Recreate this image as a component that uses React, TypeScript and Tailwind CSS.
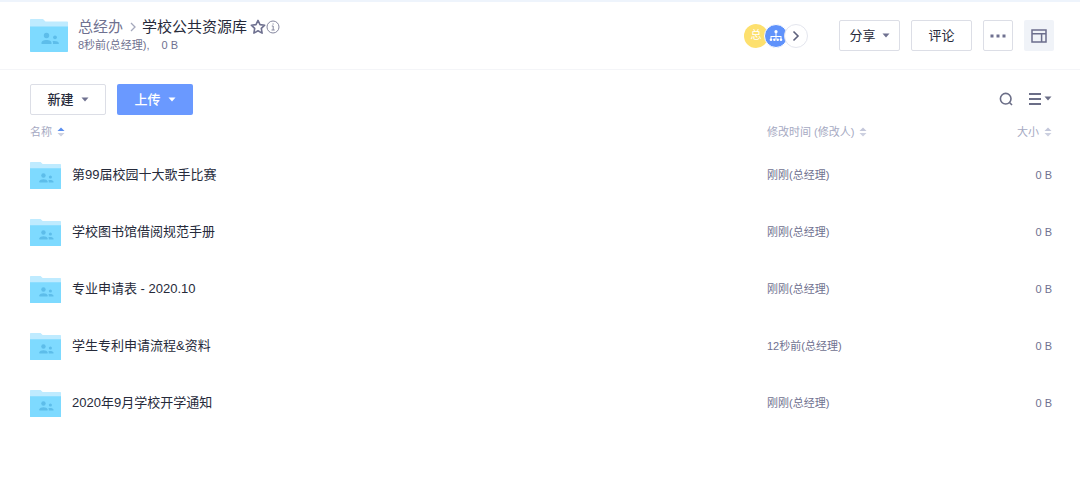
import React from "react";

interface FileEntry {
    name: string;
    modified: string;
    size: string;
}

const files: FileEntry[] = [
    { name: "第99届校园十大歌手比赛", modified: "刚刚(总经理)", size: "0 B" },
    { name: "学校图书馆借阅规范手册", modified: "刚刚(总经理)", size: "0 B" },
    { name: "专业申请表 - 2020.10", modified: "刚刚(总经理)", size: "0 B" },
    { name: "学生专利申请流程&资料", modified: "12秒前(总经理)", size: "0 B" },
    { name: "2020年9月学校开学通知", modified: "刚刚(总经理)", size: "0 B" },
];

const FolderIcon = ({ className }: { className: string }) => (
    <svg viewBox="0 0 38 33" className={className} aria-hidden="true">
        <path d="M0 .8Q0 0 .8 0h12.200l2.500 2.500H37.200q.8 0 .8.8V9H0z" fill="#bfebff" />
        <path d="M0 7.500h38V32.300q0 .7-.7.7H.7q-.7 0-.7-.7z" fill="#7edaff" />
        <g fill="#5dbdea">
            <circle cx="16.500" cy="16.500" r="2.700" />
            <path d="M11.500 25v-1.300c0-1.900 2.800-2.700 5-2.700s5 .8 5 2.700V25z" />
            <circle cx="25" cy="18.300" r="1.900" />
            <path d="M23 25v-1.500c0-.6-.2-1-.5-1.400 2.500-.6 6.300.1 6.300 1.900v1z" />
        </g>
    </svg>
);

const Caret = ({ className }: { className: string }) => (
    <svg viewBox="0 0 8 5" className={`h-[5px] w-2 shrink-0 ${className}`} fill="currentColor" aria-hidden="true">
        <path d="M.5.5h7L4 4.500z" />
    </svg>
);

const SortArrows = ({ ascending = false }: { ascending?: boolean }) => (
    <svg viewBox="0 0 8 10" className="h-[10px] w-2 shrink-0" aria-hidden="true">
        <path d="M.5 4h7L4 .5z" fill={ascending ? "#5b8ff0" : "#c3c7da"} />
        <path d="M.5 6h7L4 9.500z" fill="#ccd0e0" />
    </svg>
);

const App: React.FC = () => {
    return (
        <div className="min-h-screen bg-white font-['Liberation_Sans','Noto_Sans_CJK_SC',sans-serif] text-[#262a3a]">
            {/* Folder header */}
            <header className="flex h-[70px] items-center justify-between border-t-2 border-b border-t-[#eef4fc] border-b-[#f4f5f8] pr-[26px] pl-[30px]">
                <div className="flex items-center gap-[10px]">
                    <FolderIcon className="h-[33px] w-[38px]" />
                    <div className="pb-[2px]">
                        <div className="flex h-5 items-center text-[15px] leading-5">
                            <a href="#" className="text-[#6f7190]">总经办</a>
                            <svg viewBox="0 0 19 10" className="h-[10px] w-[19px]" fill="none" stroke="#a5a8bc" strokeWidth="1.300" aria-hidden="true">
                                <path d="m8 1 4 4-4 4" />
                            </svg>
                            <h1>学校公共资源库</h1>
                            <button type="button" aria-label="收藏" className="ml-[3px] text-[#6f7190]">
                                <svg viewBox="0 0 16 16" className="size-4" fill="none" stroke="currentColor" strokeWidth="1.600" strokeLinejoin="round">
                                    <path d="m8 1.400 2 4.200 4.700.6-3.400 3.200.8 4.700-4.100-2.300-4.100 2.300.8-4.700-3.400-3.200 4.700-.6z" />
                                </svg>
                            </button>
                            <button type="button" aria-label="详情" className="text-[#85879f]">
                                <svg viewBox="0 0 14 14" className="size-[14px]" fill="none" stroke="currentColor">
                                    <circle cx="7" cy="7" r="6" />
                                    <path d="M5.800 6h1.400v4M5.500 10h3.200" />
                                    <path d="M6.500 4h1.200" strokeWidth="1.200" />
                                </svg>
                            </button>
                        </div>
                        <p className="flex gap-3 text-[11px] leading-4 text-[#6f7190]">
                            <span>8秒前(总经理),</span>
                            <span>0 B</span>
                        </p>
                    </div>
                </div>

                <div className="flex items-center gap-[11px] text-[13px]">
                    <div className="mr-5 flex items-center">
                        <span className="flex size-6 items-center justify-center rounded-full bg-[#fde06e] text-[11px] text-white">总</span>
                        <span className="-ml-1 flex size-6 items-center justify-center rounded-full border border-white bg-[#5f92fb]">
                            <svg viewBox="0 0 14 12" className="h-3 w-[14px]" fill="#fff" aria-hidden="true">
                                <circle cx="7" cy="1.700" r="1.600" />
                                <path d="M6.500 3h1v3h5v3h-1V7h-4v2h-1V7h-4v2h-1V6h5z" />
                                <circle cx="2" cy="9.800" r="1.300" />
                                <circle cx="5.400" cy="9.800" r="1.300" />
                                <circle cx="8.700" cy="9.800" r="1.300" />
                                <circle cx="12" cy="9.800" r="1.300" />
                            </svg>
                        </span>
                        <button type="button" aria-label="更多成员" className="-ml-1 flex size-6 items-center justify-center rounded-full border border-[#e4e6ee] bg-white text-[#5e617c]">
                            <svg viewBox="0 0 10 12" className="h-3 w-[10px]" fill="none" stroke="currentColor" strokeWidth="1.600">
                                <path d="m2.500 1.500 4.500 4.500-4.500 4.500" />
                            </svg>
                        </button>
                    </div>
                    <button type="button" className="flex h-[31px] w-[61px] items-center justify-center gap-[6px] rounded-xs border border-[#dcdee6]">
                        分享
                        <Caret className="text-[#6f7190]" />
                    </button>
                    <button type="button" className="h-[31px] w-[61px] rounded-xs border border-[#dcdee6]">评论</button>
                    <button type="button" aria-label="更多" className="flex h-[31px] w-[30px] items-center justify-center rounded-xs border border-[#dcdee6] text-[#6f7190]">
                        <svg viewBox="0 0 16 4" className="h-1 w-4 shrink-0" fill="currentColor">
                            <path d="M.5.5h3v3h-3zM6.500.5h3v3h-3zM12.500.5h3v3h-3z" />
                        </svg>
                    </button>
                    <button type="button" aria-label="侧栏" className="flex h-[31px] w-[30px] items-center justify-center rounded-xs bg-[#f0f3f8] text-[#6b6e8c]">
                        <svg viewBox="0 0 16 14" className="h-[14px] w-4" fill="none" stroke="currentColor" strokeWidth="1.500">
                            <path d="M1 1h14v12H1zM1 4.700h14M10.600 4.700V13" />
                        </svg>
                    </button>
                </div>
            </header>

            {/* Toolbar */}
            <div className="flex items-center justify-between pt-[14px] pr-7 pl-[30px] text-[13px]">
                <div className="flex gap-[11px] font-medium">
                    <button type="button" className="flex h-[31px] w-[76px] items-center justify-center gap-[7px] rounded-xs border border-[#dcdee6]">
                        新建
                        <Caret className="text-[#6f7190]" />
                    </button>
                    <button type="button" className="flex h-[31px] w-[76px] items-center justify-center gap-[7px] rounded-xs bg-[#6a99ff] text-white">
                        上传
                        <Caret className="text-white" />
                    </button>
                </div>
                <div className="flex items-center gap-4 pb-[2px] text-[#6b6e87]">
                    <button type="button" aria-label="搜索">
                        <svg viewBox="0 0 14 14" className="size-[14px]" fill="none" stroke="currentColor" strokeWidth="1.600">
                            <circle cx="6.700" cy="6.700" r="5.300" />
                            <path d="m10.300 10.300 2.700 2.700" />
                        </svg>
                    </button>
                    <button type="button" aria-label="视图" className="flex items-center gap-[3px]">
                        <svg viewBox="0 0 12 12" className="size-3" fill="none" stroke="currentColor" strokeWidth="1.900">
                            <path d="M0 1h12M0 6h12M0 11h12" />
                        </svg>
                        <Caret className="text-[#6b6e87]" />
                    </button>
                </div>
            </div>

            {/* File list */}
            <div className="pr-7 pl-[30px]">
                <table className="w-full table-fixed text-left text-[11px] text-[#6f7190]">
                    <thead>
                        <tr className="h-8 text-[#a5a9c2]">
                            <th className="pt-[2px] font-normal">
                                <button type="button" className="flex items-center gap-[5px]">
                                    名称 <SortArrows ascending />
                                </button>
                            </th>
                            <th className="w-[185px] pt-[2px] font-normal">
                                <button type="button" className="flex items-center gap-[5px]">
                                    修改时间 (修改人) <SortArrows />
                                </button>
                            </th>
                            <th className="w-[100px] pt-[2px] font-normal">
                                <button type="button" className="ml-auto flex items-center gap-[5px]">
                                    大小 <SortArrows />
                                </button>
                            </th>
                        </tr>
                    </thead>
                    <tbody>
                        {files.map((file) => (
                            <tr key={file.name} className="h-[57px]">
                                <td>
                                    <div className="flex items-center gap-[11px]">
                                        <FolderIcon className="h-[27px] w-[31px]" />
                                        <a href="#" className="pb-[2px] text-[13px] text-[#262a3a]">{file.name}</a>
                                    </div>
                                </td>
                                <td>{file.modified}</td>
                                <td className="text-right">{file.size}</td>
                            </tr>
                        ))}
                    </tbody>
                </table>
            </div>
        </div>
    );
};

export default App;
